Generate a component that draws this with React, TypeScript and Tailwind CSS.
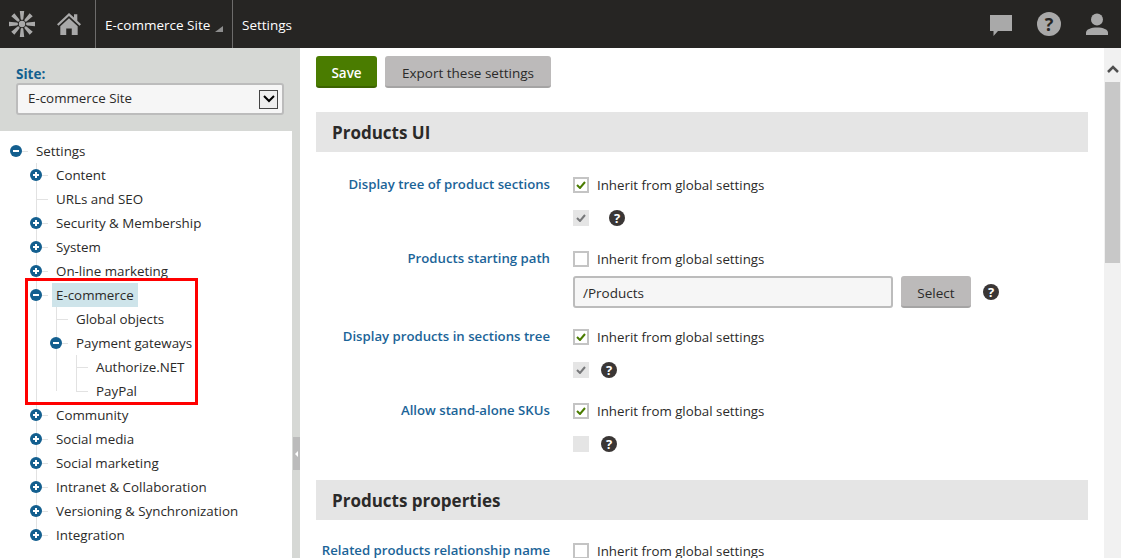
import type { ReactNode } from "react";

const font = "font-['Open_Sans','Noto_Sans',sans-serif]";

const Expander = ({ open }: { open?: boolean }) => (
  <svg viewBox="0 0 12 12" className="absolute -left-[6px] top-[6px] h-3 w-3">
    <circle cx="6" cy="6" r="6" fill="#135f8f" />
    <rect x="3" y="5" width="6" height="2" fill="#fff" />
    {!open && <rect x="5" y="3" width="2" height="6" fill="#fff" />}
  </svg>
);

interface NodeProps {
  label: string;
  expander?: "open" | "closed";
  active?: boolean;
  children?: ReactNode;
}

const Node = ({ label, expander, active, children }: NodeProps) => (
  <li className="relative">
    <div className="relative flex h-6 items-center pl-4">
      <span className="absolute left-0 top-3 h-px w-3 bg-[#e2e2e2]" />
      {expander && <Expander open={expander === "open"} />}
      <span className={`flex h-6 items-center px-1 pt-px ${active ? "bg-[#cee4ea]" : ""}`}>{label}</span>
    </div>
    {children}
  </li>
);

const Branch = ({ children }: { children: ReactNode }) => (
  <ul className="relative ml-5 before:absolute before:bottom-3 before:left-0 before:top-0 before:w-px before:bg-[#e2e2e2]">
    {children}
  </ul>
);

const Tree = () => (
  <div className="w-[292px] flex-1 bg-white pt-2 text-[13.35px] text-[#2b2a29]">
    <ul className="ml-4">
      <Node label="Settings" expander="open">
        <Branch>
          <Node label="Content" expander="closed" />
          <Node label="URLs and SEO" />
          <Node label="Security & Membership" expander="closed" />
          <Node label="System" expander="closed" />
          <Node label="On-line marketing" expander="closed" />
          <Node label="E-commerce" expander="open" active>
            <Branch>
              <Node label="Global objects" />
              <Node label="Payment gateways" expander="open">
                <Branch>
                  <Node label="Authorize.NET" />
                  <Node label="PayPal" />
                </Branch>
              </Node>
            </Branch>
          </Node>
          <Node label="Community" expander="closed" />
          <Node label="Social media" expander="closed" />
          <Node label="Social marketing" expander="closed" />
          <Node label="Intranet & Collaboration" expander="closed" />
          <Node label="Versioning & Synchronization" expander="closed" />
          <Node label="Integration" expander="closed" />
        </Branch>
      </Node>
    </ul>
  </div>
);

const Logo = () => (
  <svg viewBox="0 0 28 28" className="h-7 w-7" fill="#a9a9a9">
    <circle cx="14" cy="14" r="3.2" />
    {[0, 45, 90, 135, 180, 225, 270, 315].map((a) => (
      <path key={a} d="M11.800 1h4.400l-.8 7.600a1.400 1.400 0 0 1-2.800 0z" transform={`rotate(${a} 14 14)`} />
    ))}
  </svg>
);

const HomeIcon = () => (
  <svg viewBox="0 0 26 24" className="h-6 w-6" fill="#a9a9a9">
    <path d="M13 0 0 12.200l1.600 1.700L13 3.400l11.400 10.500 1.600-1.700-4-3.700V1.500h-3.600v3.400z" />
    <path d="M13 5.800 3.600 14.400V24H10v-7h6v7h6.400v-9.600z" />
  </svg>
);

const TopBar = () => (
  <header className="flex h-12 shrink-0 items-stretch bg-[#262523] text-[13.5px] text-white">
    <div className="flex w-[96px] items-center border-r border-[#6d6c6b] pl-2">
      <Logo />
      <span className="ml-[21px]">
        <HomeIcon />
      </span>
    </div>
    <div className="flex w-[137px] items-center border-r border-[#6d6c6b] pl-[9px] pt-[3px]">
      E-commerce Site
      <svg viewBox="0 0 8 6" className="ml-[5px] mt-[6px] h-[6px] w-2" fill="#8d8d8d">
        <path d="M8 0v6H0z" />
      </svg>
    </div>
    <div className="flex items-center pl-[9px] pt-[3px]">Settings</div>
    <div className="ml-auto flex items-center">
      <svg viewBox="0 0 22 22" className="mt-[3px] h-[22px] w-[22px]" fill="#a9a9a9">
        <path d="M0 0h22v16H8l-4.500 5v-5H0z" />
      </svg>
      <div className="ml-[25px] flex h-6 w-6 items-center justify-center rounded-full bg-[#a9a9a9] text-[18px] font-bold text-[#262523]">
        ?
      </div>
      <svg viewBox="0 0 22 22" className="ml-[25px] mr-[13px] h-[22px] w-[22px]" fill="#a9a9a9">
        <circle cx="11" cy="6.500" r="6" />
        <path d="M0 22v-2.500c0-3 5-5 11-5s11 2 11 5V22z" />
      </svg>
    </div>
  </header>
);

const Sidebar = () => (
  <aside className="relative flex w-[300px] shrink-0 flex-col bg-[#d6d8d5]">
    <div className="h-[83px] px-4 pt-[17px]">
      <div className="text-[13.5px] font-bold leading-[18px] text-[#135f8f]">Site:</div>
      <div className="flex h-8 w-[268px] items-center justify-between rounded-[3px] border-2 border-[#bcbcbc] bg-[#f6f6f6] pl-[10px] pr-1 text-[13.35px] text-[#2b2a29]">
        <span className="pb-[2px]">E-commerce Site</span>
        <span className="flex h-[19px] w-[19px] items-center justify-center border border-[#444] bg-[#eeeeee]">
          <svg viewBox="0 0 12 8" className="h-2 w-3" fill="none" stroke="#000" strokeWidth="2">
            <path d="M1 1l5 5 5-5" />
          </svg>
        </span>
      </div>
    </div>
    <Tree />
    <div className="absolute right-0 top-[389px] flex h-[33px] w-[7px] items-center justify-center bg-[#bbbbbb]">
      <span className="border-y-[3px] border-r-[3px] border-y-transparent border-r-white" />
    </div>
  </aside>
);

const HelpDot = ({ className }: { className: string }) => (
  <span className={`flex h-4 w-4 items-center justify-center rounded-full bg-[#3a3635] text-[13px] font-bold leading-none text-white ${className}`}>
    ?
  </span>
);

const CheckMark = ({ color }: { color: string }) => (
  <svg viewBox="0 0 10 8" className="h-2 w-[10px]" fill="none" stroke={color} strokeWidth="2">
    <path d="M1 4l3 3 5-6" />
  </svg>
);

const Inherit = ({ checked, label }: { checked?: boolean; label: string }) => (
  <div className="flex h-5 items-center">
    <span className="w-[234px] text-right text-[13.2px] font-semibold text-[#1b6498]">{label}</span>
    <span className="ml-[23px] flex h-4 w-4 items-center justify-center border-2 border-[#c4c4c4] bg-white">
      {checked && <CheckMark color="#4a7c00" />}
    </span>
    <span className="ml-2 pt-[2px] text-[13.3px]">Inherit from global settings</span>
  </div>
);

const Disabled = ({ checked, helpGap }: { checked?: boolean; helpGap: string }) => (
  <div className="mt-[13px] flex h-5 items-center pl-[257px]">
    <span className="flex h-4 w-4 items-center justify-center bg-[#e5e5e5]">
      {checked && <CheckMark color="#77787a" />}
    </span>
    <HelpDot className={helpGap} />
  </div>
);

const Section = ({ title }: { title: string }) => (
  <h2 className="flex h-10 items-center bg-[#e5e5e5] pl-4 pt-px text-[17px] font-bold text-[#2b2a29]">{title}</h2>
);

const Content = () => (
  <main className="flex min-w-0 flex-1 overflow-hidden bg-white">
    <div className="w-[804px] shrink-0 pl-4 text-[13.5px] text-[#2b2a29]">
      <div className="mt-2 flex gap-2">
        <button className="h-8 w-[61px] rounded-[3px] border-b-2 border-[#3c6300] bg-[#4a7c00] pt-[5px] font-semibold text-white">
          Save
        </button>
        <button className="h-8 w-[166px] rounded-[3px] border-b-2 border-[#a5a4a4] bg-[#bcbaba] pt-[5px] font-medium text-[#2b2a29]">
          Export these settings
        </button>
      </div>
      <div className="mt-6 w-[772px]">
        <Section title="Products UI" />
        <div className="mt-[23px]">
          <Inherit checked label="Display tree of product sections" />
          <Disabled checked helpGap="ml-5" />
        </div>
        <div className="mt-[21px]">
          <Inherit label="Products starting path" />
          <div className="mt-[7px] flex items-center pl-[257px]">
            <div className="flex h-8 w-[320px] items-center rounded-[3px] border-2 border-[#bcbcbc] bg-[#f6f6f6] pl-2 pt-[3px]">
              /Products
            </div>
            <button className="ml-2 h-8 w-[70px] rounded-[3px] border-b-2 border-[#a5a4a4] bg-[#bcbaba] pt-[5px] font-medium">
              Select
            </button>
            <HelpDot className="ml-3" />
          </div>
        </div>
        <div className="mt-[19px]">
          <Inherit checked label="Display products in sections tree" />
          <Disabled checked helpGap="ml-3" />
        </div>
        <div className="mt-[21px]">
          <Inherit checked label="Allow stand-alone SKUs" />
          <Disabled helpGap="ml-3" />
        </div>
        <div className="mt-[26px]">
          <Section title="Products properties" />
        </div>
        <div className="mt-[21px]">
          <Inherit label="Related products relationship name" />
        </div>
      </div>
    </div>
    <div className="ml-auto flex w-[17px] shrink-0 flex-col items-center bg-[#f1f1f1]">
      <svg viewBox="0 0 12 8" className="mt-[17px] h-2 w-3" fill="none" stroke="#505050" strokeWidth="2.500">
        <path d="M1 7l5-5 5 5" />
      </svg>
      <div className="mt-[9px] h-[181px] w-[15px] bg-[#c8c8c8]" />
    </div>
  </main>
);

export default function App() {
  return (
    <div className={`relative flex h-[558px] w-[1121px] flex-col overflow-hidden ${font}`}>
      <TopBar />
      <div className="flex min-h-0 flex-1">
        <Sidebar />
        <Content />
      </div>
      {/* annotation box from the screenshot */}
      <div className="absolute left-[25px] top-[278px] h-[127px] w-[173px] border-[3px] border-[#ff0000]" />
    </div>
  );
}
